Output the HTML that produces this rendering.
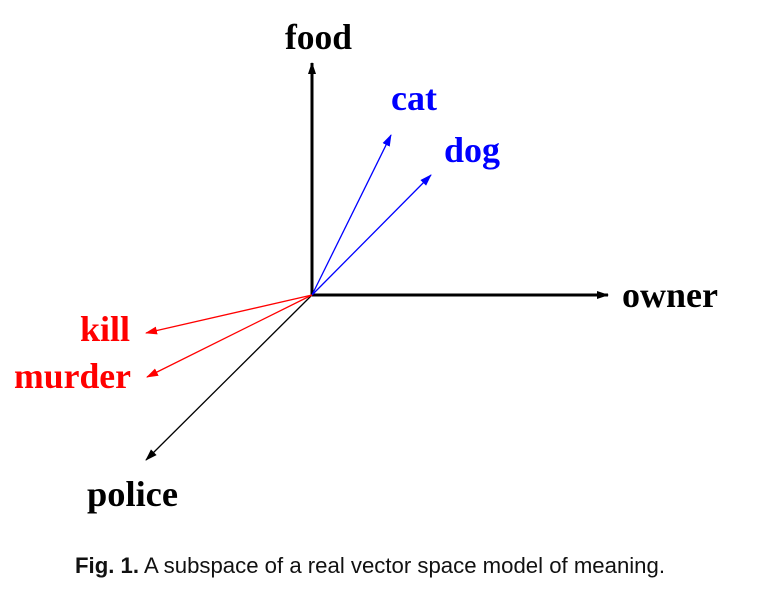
<!DOCTYPE html>
<html><head><style>html,body{margin:0;padding:0;background:#fff;width:777px;height:599px;overflow:hidden}</style></head>
<body>
<svg width="777" height="599" viewBox="0 0 777 599" xmlns="http://www.w3.org/2000/svg">
<defs>
<marker id="ak" markerWidth="12" markerHeight="8" refX="11" refY="4" orient="auto" markerUnits="userSpaceOnUse"><path d="M0,0 L12,4 L0,8 Z" fill="#000"/></marker>
<marker id="ab" markerWidth="12" markerHeight="8" refX="11" refY="4" orient="auto" markerUnits="userSpaceOnUse"><path d="M0,0 L12,4 L0,8 Z" fill="#00f"/></marker>
<marker id="ar" markerWidth="12" markerHeight="8" refX="11" refY="4" orient="auto" markerUnits="userSpaceOnUse"><path d="M0,0 L12,4 L0,8 Z" fill="#f00"/></marker>
</defs>
<line x1="312" y1="295" x2="312" y2="63" stroke="#000" stroke-width="3" marker-end="url(#ak)"/>
<line x1="312" y1="295" x2="608" y2="295" stroke="#000" stroke-width="3" marker-end="url(#ak)"/>
<line x1="312" y1="295" x2="146" y2="460" stroke="#000" stroke-width="1.3" marker-end="url(#ak)"/>
<line x1="312" y1="295" x2="391" y2="135" stroke="#00f" stroke-width="1.3" marker-end="url(#ab)"/>
<line x1="312" y1="295" x2="431" y2="175" stroke="#00f" stroke-width="1.3" marker-end="url(#ab)"/>
<line x1="312" y1="295" x2="146" y2="333" stroke="#f00" stroke-width="1.3" marker-end="url(#ar)"/>
<line x1="312" y1="295" x2="147" y2="377" stroke="#f00" stroke-width="1.3" marker-end="url(#ar)"/>
<g font-family="Liberation Serif, serif" font-weight="bold" font-size="36">
<text x="285" y="49" fill="#000" textLength="67" lengthAdjust="spacingAndGlyphs">food</text>
<text x="391" y="110" fill="#00f" textLength="46" lengthAdjust="spacingAndGlyphs">cat</text>
<text x="444" y="162" fill="#00f" textLength="56" lengthAdjust="spacingAndGlyphs">dog</text>
<text x="622" y="307" fill="#000" textLength="96" lengthAdjust="spacingAndGlyphs">owner</text>
<text x="80" y="341" fill="#f00" textLength="50" lengthAdjust="spacingAndGlyphs">kill</text>
<text x="14" y="388" fill="#f00" textLength="117" lengthAdjust="spacingAndGlyphs">murder</text>
<text x="87" y="506" fill="#000" textLength="91" lengthAdjust="spacingAndGlyphs">police</text>
</g>
<text x="75" y="573" font-family="Liberation Sans, sans-serif" font-size="22" fill="#111" textLength="590" lengthAdjust="spacingAndGlyphs"><tspan font-weight="bold">Fig. 1.</tspan> A subspace of a real vector space model of meaning.</text>
</svg>
</body></html>
